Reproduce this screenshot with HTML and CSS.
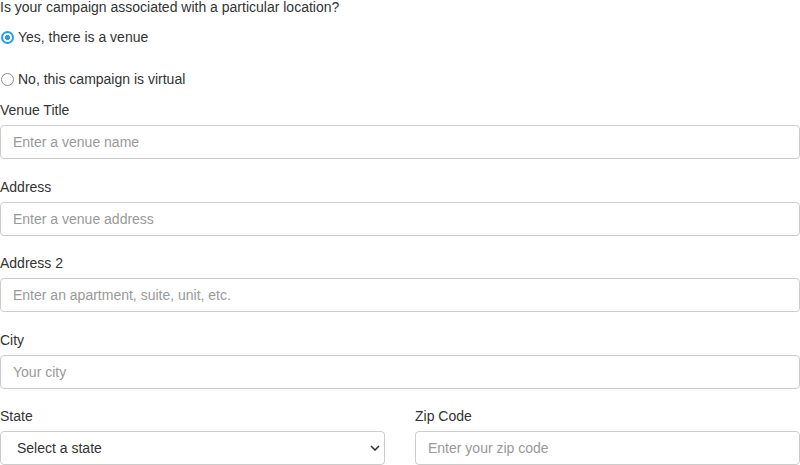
FILE: index.html
```html
<!DOCTYPE html>
<html lang="en">
<head>
    <meta charset="UTF-8">
    <meta name="viewport" content="width=device-width, initial-scale=1.0">
    <title>Venue</title>
    <link rel="stylesheet" href="styles.css">
</head>
<body>
    <form class="venue-form">
        <p class="question">Is your campaign associated with a particular location?</p>

        <label class="radio">
            <input type="radio" name="location" value="venue" checked>
            Yes, there is a venue
        </label>
        <label class="radio radio-second">
            <input type="radio" name="location" value="virtual">
            No, this campaign is virtual
        </label>

        <div class="form-group">
            <label for="venueTitle">Venue Title</label>
            <input type="text" id="venueTitle" class="form-control" placeholder="Enter a venue name">
        </div>

        <div class="form-group">
            <label for="address">Address</label>
            <input type="text" id="address" class="form-control" placeholder="Enter a venue address">
        </div>

        <div class="form-group">
            <label for="address2">Address 2</label>
            <input type="text" id="address2" class="form-control" placeholder="Enter an apartment, suite, unit, etc.">
        </div>

        <div class="form-group">
            <label for="city">City</label>
            <input type="text" id="city" class="form-control" placeholder="Your city">
        </div>

        <div class="row">
            <div class="form-group">
                <label for="state">State</label>
                <div class="select-wrap">
                    <select id="state" class="form-control select">
                        <option>Select a state</option>
                    </select>
                    <svg class="chevron" width="10" height="6" viewBox="0 0 10 6">
                        <path d="M1 1 L5 5 L9 1" fill="none" stroke="#333" stroke-width="1.6"/>
                    </svg>
                </div>
            </div>
            <div class="form-group">
                <label for="zip">Zip Code</label>
                <input type="text" id="zip" class="form-control" placeholder="Enter your zip code">
            </div>
        </div>
    </form>
</body>
</html>
```

FILE: styles.css
```css
body {
    margin: 0;
    padding: 0;
    font-family: "Liberation Sans", Arial, sans-serif;
    font-size: 14px;
    line-height: 20px;
    color: #333;
    background: #fff;
    overflow: hidden;
}

.question {
    margin: -3px 0 0 0;
}

.radio {
    display: flex;
    align-items: center;
    gap: 4px;
    height: 20px;
    margin-top: 10px;
}

.radio-second {
    margin-top: 22px;
}

.radio input {
    appearance: none;
    margin: 0 0 0 1px;
    width: 13px;
    height: 13px;
    border: 1px solid #8e8e8e;
    border-radius: 50%;
    background: #fff;
    box-sizing: border-box;
}

.radio input:checked {
    border: 2px solid #22a0ec;
    background: radial-gradient(circle, #22a0ec 0 2.2px, #fff 2.8px);
}

.form-group {
    margin-top: 11px;
}

.form-group + .form-group,
.row {
    margin-top: 17.5px;
}

.form-group label {
    display: block;
    margin-bottom: 5px;
}

.form-control {
    display: block;
    width: 100%;
    height: 34px;
    padding: 6px 12px;
    font-family: inherit;
    font-size: 14px;
    color: #555;
    background: #fff;
    border: 1px solid #ccc;
    border-radius: 4px;
    box-sizing: border-box;
}

.form-control::placeholder {
    color: #999;
}

.row {
    display: grid;
    grid-template-columns: 1fr 1fr;
    column-gap: 30px;
}

.row .form-group {
    margin-top: 0;
}

.select-wrap {
    position: relative;
}

.select {
    appearance: none;
    padding-left: 16px;
    color: #333;
}

.chevron {
    position: absolute;
    right: 5px;
    top: 14px;
    pointer-events: none;
}
```
